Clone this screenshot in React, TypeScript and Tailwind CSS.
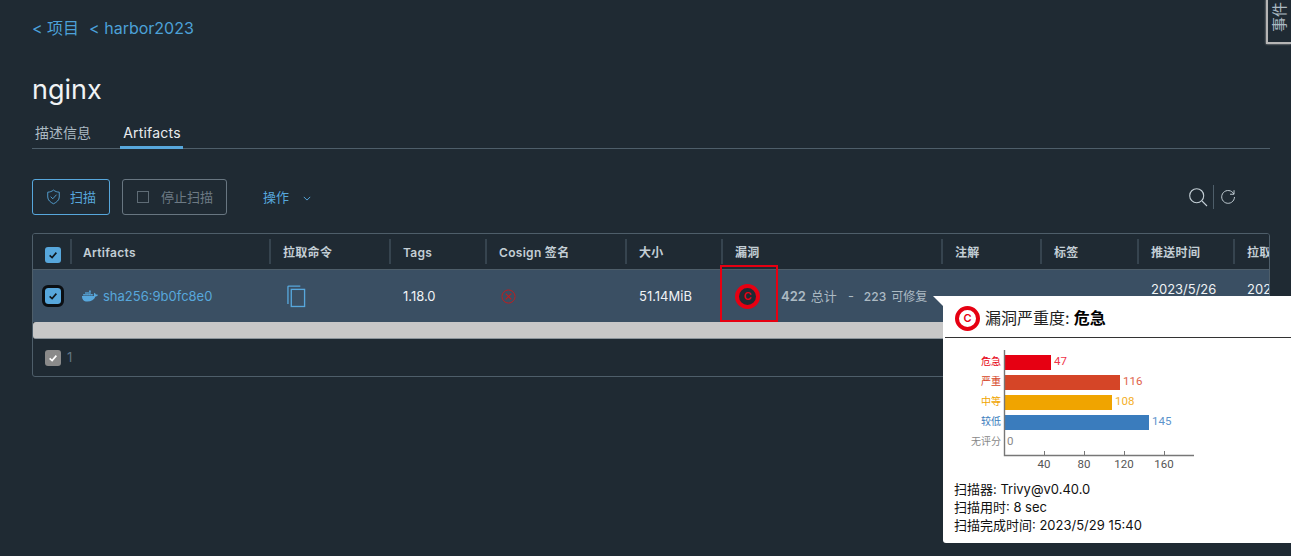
import React from "react";
import { FaDocker } from "react-icons/fa";

const SANS = "font-['Inter','Noto_Sans_CJK_SC',sans-serif]";

function Check({ className }: { className?: string }) {
  return (
    <svg viewBox="0 0 16 16" className={className} fill="none" stroke="currentColor" strokeWidth="2.2">
      <path d="M3.5 8.5 L6.8 11.5 L12.5 4.8" />
    </svg>
  );
}

function Box({ focused }: { focused?: boolean }) {
  return (
    <span
      className={`flex h-4 w-4 items-center justify-center rounded-[3px] bg-[#57a7dc] text-[#10181e] ${
        focused ? "outline-[3px] outline-[#0b0f13]" : ""
      }`}
    >
      <Check className="h-3 w-3" />
    </span>
  );
}

function CBadge({ size, ring, inner, fs }: { size: string; ring: string; inner: string; fs: string }) {
  return (
    <span className={`flex items-center justify-center rounded-full border-[#e60012] ${size} ${ring} ${inner}`}>
      <span className={`${fs} leading-none text-[#e60012]`}>C</span>
    </span>
  );
}

const headers: [string, string][] = [
  ["Artifacts", "pl-[11px]"],
  ["拉取命令", "pl-[12px]"],
  ["Tags", "pl-[12px]"],
  ["Cosign 签名", "pl-[12px]"],
  ["大小", "pl-[12px]"],
  ["漏洞", "pl-[12px]"],
  ["注解", "pl-[12px]"],
  ["标签", "pl-[12px]"],
  ["推送时间", "pl-[12px]"],
  ["拉取时间", "pl-[12px]"],
];

const GRID = "grid grid-cols-[39px_199px_120px_96px_140px_96px_220px_99px_97px_96px_96px]";

const bars = [
  { label: "危急", y: 355, v: 47, c: "#e60012", t: "#f0334a" },
  { label: "严重", y: 375, v: 116, c: "#d54527", t: "#e0624a" },
  { label: "中等", y: 395, v: 108, c: "#f0a400", t: "#f4b02a" },
  { label: "较低", y: 415, v: 145, c: "#3a7cbd", t: "#5c94cc" },
];

function Chart() {
  const ox = 943;
  const oy = 338;
  return (
    <svg width="270" height="137" viewBox={`${ox} ${oy} 270 137`} className="block" fontFamily="'Noto Sans CJK SC',sans-serif">
      {bars.map((b) => (
        <g key={b.label}>
          <rect x={1004} y={b.y} width={b.v} height={15} fill={b.c} />
          <text x={1001} y={b.y + 10} textAnchor="end" fontSize="10" fill={b.c}>{b.label}</text>
          <text x={1007 + b.v} y={b.y + 10} fontSize="11.5" fill={b.t} fontFamily="Roboto,sans-serif">{b.v}</text>
        </g>
      ))}
      <text x={1001} y={445} textAnchor="end" fontSize="10" fill="#888">无评分</text>
      <text x={1007} y={445} fontSize="11.5" fill="#888" fontFamily="Roboto,sans-serif">0</text>
      <path d="M1004.5 350 V455.5 H1194" fill="none" stroke="#777" strokeWidth="1.4" />
      {[40, 80, 120, 160].map((t) => (
        <g key={t}>
          <path d={`M${1004 + t + 0.5} 451 V455`} stroke="#777" />
          <text x={1004 + t} y={468} textAnchor="middle" fontSize="11.5" fill="#555" fontFamily="Roboto,sans-serif">{t}</text>
        </g>
      ))}
    </svg>
  );
}

export default function App() {
  return (
    <div className={`${SANS} relative h-[556px] w-[1291px] overflow-hidden bg-[#1f2a33] text-[#acbac3]`}>
      {/* side tab */}
      <div className="absolute right-0 top-[-1px] flex h-[45px] w-[25px] items-start justify-center border-b-[2px] border-l-[2px] border-[#b5b5b5] bg-[#1f2a33] shadow-[0_0_2px_#b5b5b5]">
        <span className="mt-[7px] -rotate-90 whitespace-nowrap text-[15px] leading-[22px] text-[#acbac3]">事件</span>
      </div>

      <div className="flex flex-col pl-[32px] pr-[21px]">
        {/* breadcrumb */}
        <div className="mt-[18px] flex h-[20px] items-center text-[16px] text-[#4ca1d8]">
          <span>&lt; 项目</span>
          <span className="ml-[10px]">&lt; harbor2023</span>
        </div>

        <div className="mt-[32px] h-[40px] text-[27px] leading-[40px] text-[#f0f3f5]">nginx</div>

        {/* tabs */}
        <div className="mt-[1px] flex h-[38px] items-end border-b border-[#4e5e6a] text-[14px]">
          <span className="flex h-[26px] w-[88px] items-start pl-[3px] text-[#acbac3]">描述信息</span>
          <span className="-mb-px flex h-[27px] w-[63px] items-start justify-center border-b-[3px] border-[#57a7dc] pl-[1px] tracking-[0.2px] text-[#e9ecef]">Artifacts</span>
        </div>

        {/* toolbar */}
        <div className="mt-[30px] flex h-[36px] items-center">
          <button className="flex h-[36px] w-[78px] items-center rounded-[3px] border border-[#57a7dc] pl-[13px] text-[13px] text-[#57a7dc]">
            <svg viewBox="0 0 16 18" className="h-[16px] w-[15px]" fill="none" stroke="currentColor" strokeWidth="1">
              <path d="M8 1.2 C10 2.8 12 3.4 14.5 3.6 V9 C14.5 12.5 11.5 15 8 16.6 C4.5 15 1.5 12.5 1.5 9 V3.6 C4 3.4 6 2.8 8 1.2 Z" />
              <path d="M4.8 8.6 L7.2 11 L11.4 6.4" />
            </svg>
            <span className="ml-[9px] pt-[2px]">扫描</span>
          </button>
          <button className="ml-[12px] flex h-[36px] w-[105px] items-center rounded-[3px] border border-[#687681] pl-[14px] text-[13px] text-[#6d7a84]">
            <span className="h-[12px] w-[12px] border border-[#5f6c76]" />
            <span className="ml-[12px] pt-[2px]">停止扫描</span>
          </button>
          <span className="ml-[36px] pt-[2px] text-[13px] text-[#57a7dc]">操作</span>
          <svg viewBox="0 0 10 6" className="ml-[14px] mt-[2px] h-[5px] w-[8px]" fill="none" stroke="#57a7dc" strokeWidth="1.2">
            <path d="M1 1 L5 5 L9 1" />
          </svg>
          <div className="ml-auto mr-[34px] flex items-center">
            <svg viewBox="0 0 20 20" className="h-[20px] w-[20px]" fill="none" stroke="#c3ced5" strokeWidth="1.1">
              <circle cx="8.7" cy="8.7" r="7" />
              <path d="M14 14 L19 19" />
            </svg>
            <span className="ml-[5px] h-[24px] w-px bg-[#4e5e6a]" />
            <svg viewBox="0 0 18 18" className="ml-[6px] h-[16px] w-[16px]" fill="none" stroke="#c3ced5" strokeWidth="1.1">
              <path d="M15.5 5.6 A7.2 7.2 0 1 0 16.3 9" />
              <path d="M15.8 1.4 V5.9 H11.3" />
            </svg>
          </div>
        </div>

        {/* datagrid */}
        <div className="mt-[18px] flex h-[144px] flex-col overflow-hidden rounded-[3px] border border-[#4e5e6a]">
          <div className={`${GRID} h-[36px] shrink-0 border-b border-[#4e5e6a] bg-[#1f2a33]`}>
            <div className="flex items-end justify-center pb-[6px]"><Box /></div>
            {headers.map(([h, p]) => (
              <div key={h} className="flex items-center">
                <span className="ml-[-2px] h-[25px] w-[2px] shrink-0 bg-[#36444f]" />
                <span className={`${p} whitespace-nowrap pt-[2px] text-[12px] font-semibold tracking-[0.3px] text-[#c3ced5]`}>{h}</span>
              </div>
            ))}
          </div>

          <div className={`${GRID} h-[52px] shrink-0 bg-[#3a4f63] text-[13px]`}>
            <div className="flex items-center justify-center"><Box focused /></div>
            <div className="flex items-center pl-[10px] text-[#57a7dc]">
              <FaDocker className="h-[16px] w-[16px] text-[#57a7dc]" />
              <span className="ml-[5px] pt-[1px]">sha256:9b0fc8e0</span>
            </div>
            <div className="flex items-center pl-[16px]">
              <svg viewBox="0 0 20 24" className="h-[23px] w-[19px]" fill="none" stroke="#57a7dc" strokeWidth="1.4">
                <path d="M1 20 V2 Q1 1 2 1 H14" />
                <rect x="4.5" y="4.5" width="14" height="18" />
              </svg>
            </div>
            <div className="flex items-center pl-[12px] pt-[1px] text-[#f0f3f5]">1.18.0</div>
            <div className="flex items-center pl-[14px]">
              <svg viewBox="0 0 16 16" className="h-[15px] w-[15px]" fill="none" stroke="#c21d1d" strokeWidth="1">
                <circle cx="8" cy="8" r="7" />
                <path d="M5 5 L11 11 M11 5 L5 11" strokeWidth="1.2" />
              </svg>
            </div>
            <div className="flex items-center pl-[12px] pt-[1px] text-[#f0f3f5]">51.14MiB</div>
            <div className="relative flex items-center pl-[12px]">
              <CBadge size="h-[25px] w-[25px]" ring="border-[4px]" inner="bg-[#1f2a33]" fs="text-[11px] font-semibold" />
              <span className="ml-[21px] whitespace-nowrap pt-[1px] font-semibold text-[#acbac3]">422</span>
              <span className="ml-[5px] whitespace-nowrap pt-[1px] text-[#acbac3]">总计</span>
              <span className="ml-[11px] pt-[1px] text-[#acbac3]">-</span>
              <span className="ml-[10px] whitespace-nowrap pt-[1px] text-[12px] font-medium text-[#acbac3]">223</span>
              <span className="ml-[5px] whitespace-nowrap pt-[1px] text-[12px] text-[#acbac3]">可修复</span>
              <span className="absolute left-[-3px] top-[-5px] h-[57px] w-[58px] border-[2px] border-[#e60012]" />
            </div>
            <div />
            <div />
            <div className="pl-[12px] pt-[10px] text-[#f0f3f5]">2023/5/26</div>
            <div className="pl-[12px] pt-[10px] text-[#f0f3f5]">2023/5/26</div>
          </div>

          <div className="h-[17px] shrink-0 rounded-[3px] border-b border-[#8b949b] bg-[#c8c8c8]" />

          <div className="flex flex-1 items-center pl-[12px] text-[13px]">
            <span className="flex h-4 w-4 items-center justify-center rounded-[3px] bg-[#8a8a8a] text-white">
              <Check className="h-3 w-3" />
            </span>
            <span className="ml-[6px] text-[#5f7686]">1</span>
          </div>
        </div>
      </div>

      {/* popover */}
      <div className="absolute left-[943px] top-[296px] h-[247px] w-[348px] rounded-bl-[3px] bg-white text-black">
        <span className="absolute left-[-10px] top-0 h-0 w-0 border-l-[10px] border-t-[10px] border-l-transparent border-t-white" />
        <div className="ml-[2px] flex h-[42px] items-end border-b border-[#333] pb-[6px] pl-[10px]">
          <CBadge size="h-[25px] w-[25px]" ring="border-[4px]" inner="bg-white" fs="text-[11px] font-semibold" />
          <span className="ml-[5px] text-[16px] leading-[25px] text-[#222]">漏洞严重度:</span>
          <span className="ml-[4px] text-[16px] font-bold leading-[25px]">危急</span>
        </div>
        <Chart />
        <div className="ml-[11px] mt-[5px] text-[13px] leading-[18px] text-[#111]">
          <div>扫描器: Trivy@v0.40.0</div>
          <div>扫描用时: 8 sec</div>
          <div>扫描完成时间: 2023/5/29 15:40</div>
        </div>
      </div>
    </div>
  );
}
